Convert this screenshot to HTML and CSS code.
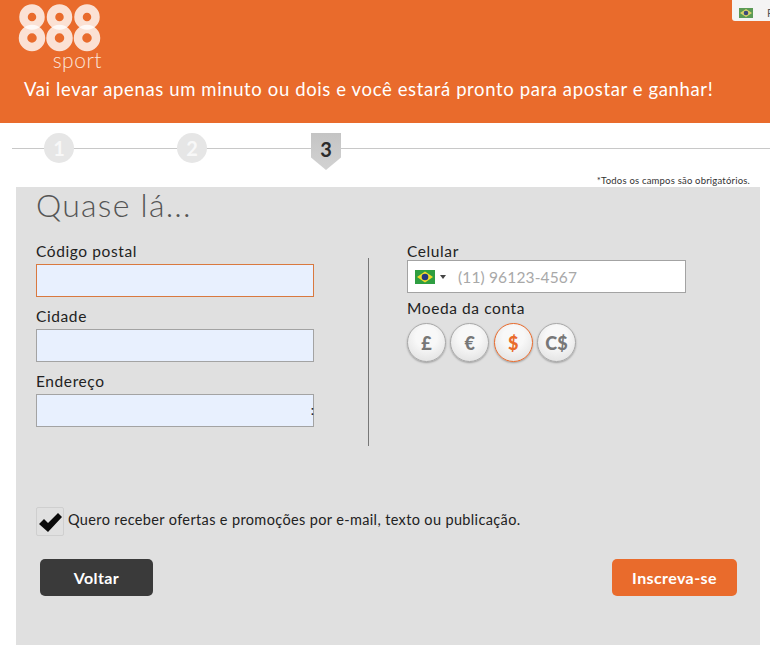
FILE: index.html
```html
<!DOCTYPE html>
<html lang="pt-BR">
<head>
    <meta charset="UTF-8">
    <title>888sport - Inscrição</title>
    <link rel="stylesheet" href="styles.css">
</head>
<body>
    <header class="header">
        <div class="logo">
            <svg class="logo-mark" width="88" height="50" viewBox="0 0 88 50">
                <g fill="none" stroke="#fff" stroke-opacity="0.8" stroke-width="8.5">
                    <circle cx="16" cy="14" r="8.500"/><circle cx="16" cy="35" r="9"/>
                    <circle cx="43.500" cy="14" r="8.500"/><circle cx="43.500" cy="35" r="9"/>
                    <circle cx="71" cy="14" r="8.500"/><circle cx="71" cy="35" r="9"/>
                </g>
            </svg>
            <span class="logo-sport">sport</span>
        </div>
        <p class="tagline">Vai levar apenas um minuto ou dois e você estará pronto para apostar e ganhar!</p>
        <div class="lang-tab">
            <svg class="lang-flag" width="14" height="10" viewBox="0 0 14 10"><rect width="14" height="10" fill="#5b9a55"/><path d="M7 1 13 5 7 9 1 5z" fill="#d9d36a"/><circle cx="7" cy="5" r="2.300" fill="#3d4a7a"/></svg>
            <span>P</span>
        </div>
    </header>

    <div class="steps">
        <div class="step">1</div>
        <div class="step">2</div>
        <div class="step step-current">3</div>
    </div>
    <p class="required-note">*Todos os campos são obrigatórios.</p>

    <main class="panel">
        <h1>Quase lá...</h1>
        <div class="columns">
            <div class="col-left">
                <div class="form-group">
                    <label>Código postal</label>
                    <input type="text" class="field field-focus">
                </div>
                <div class="form-group">
                    <label>Cidade</label>
                    <input type="text" class="field">
                </div>
                <div class="form-group">
                    <label>Endereço</label>
                    <div class="field-wrap">
                        <input type="text" class="field">
                        <span class="field-dots">:</span>
                    </div>
                </div>
            </div>
            <div class="divider"></div>
            <div class="col-right">
                <label>Celular</label>
                <div class="phone">
                    <svg width="20" height="14" viewBox="0 0 20 14"><rect width="20" height="14" fill="#2f9e41"/><path d="M10 1.500 18 7 10 12.500 2 7z" fill="#f2d92c"/><circle cx="10" cy="7" r="3.300" fill="#24377f"/></svg>
                    <span class="caret"></span>
                    <span class="phone-placeholder">(11) 96123-4567</span>
                </div>
                <label class="label-currency">Moeda da conta</label>
                <div class="currencies">
                    <button class="coin">£</button>
                    <button class="coin">€</button>
                    <button class="coin coin-active">$</button>
                    <button class="coin">C$</button>
                </div>
            </div>
        </div>

        <div class="optin">
            <span class="checkbox">
                <svg width="26" height="24" viewBox="0 0 26 24"><path d="M1 13 6 8 10 12 20 2 24 6 10 21z" fill="#0a0a0a"/></svg>
            </span>
            <span class="optin-text">Quero receber ofertas e promoções por e-mail, texto ou publicação.</span>
        </div>

        <div class="buttons">
            <button class="btn btn-back">Voltar</button>
            <button class="btn btn-submit">Inscreva-se</button>
        </div>
    </main>
</body>
</html>
```

FILE: styles.css
```css
* {
    box-sizing: border-box;
}
body {
    margin: 0;
    background: white;
    font-family: "Lato", "Liberation Sans", sans-serif;
    color: #222;
    overflow: hidden;
}
.header {
    position: relative;
    height: 123px;
    background: #e96b2c;
    padding: 3px 0 0 16px;
    color: #fbe4d8;
}
.logo {
    width: 88px;
}
.logo-mark {
    display: block;
}
.logo-sport {
    display: block;
    margin-top: -3px;
    text-align: right;
    font-size: 21px;
    font-weight: 300;
    line-height: 19px;
    letter-spacing: 0.5px;
    padding-right: 2px;
}
.tagline {
    margin: 8px 0 0 8px;
    font-size: 18.5px;
    line-height: 24px;
    letter-spacing: 0.62px;
    color: white;
    white-space: nowrap;
}
.lang-tab {
    position: absolute;
    top: 0;
    right: 0;
    width: 38px;
    height: 21px;
    background: #f4f4f4;
    border-radius: 0 0 0 3px;
    padding: 8px 0 0 7px;
    display: flex;
    gap: 14px;
    font-size: 11px;
    line-height: 10px;
    color: #555;
}
.lang-flag {
    flex: none;
}
.steps {
    position: relative;
    display: flex;
    gap: 103px;
    height: 47px;
    padding: 10px 0 0 44px;
}
.steps::before {
    content: "";
    position: absolute;
    left: 12px;
    right: 0;
    top: 25px;
    height: 1px;
    background: #c8c8c8;
}
.step {
    position: relative;
    width: 30px;
    height: 30px;
    border-radius: 50%;
    background: #e6e6e6;
    color: #f8f8f8;
    font-size: 20px;
    font-weight: 700;
    line-height: 30px;
    text-align: center;
}
.step-current {
    height: 37px;
    margin-left: 1px;
    border-radius: 0;
    background: linear-gradient(#c4c4c4, #d2d2d2);
    color: #2b2b2b;
    line-height: 32px;
    clip-path: polygon(0 0, 100% 0, 100% 66%, 50% 100%, 0 66%);
}
.required-note {
    margin: 0;
    height: 17px;
    padding: 5px 20px 0 0;
    text-align: right;
    font-size: 9.5px;
    line-height: 12px;
    letter-spacing: 0.2px;
    color: #333;
}
.panel {
    width: 744px;
    height: 458px;
    margin-left: 16px;
    background: #e0e0e0;
    padding: 0 20px;
}
h1 {
    margin: 0;
    height: 71px;
    font-size: 32px;
    font-weight: 300;
    line-height: 36px;
    letter-spacing: 1.25px;
    color: #555;
}
.columns {
    display: flex;
    height: 188px;
}
.col-left {
    width: 278px;
    margin-top: -16px;
}
.divider {
    width: 1px;
    margin-left: 54px;
    background: #777;
}
.col-right {
    width: 279px;
    margin: -16px 0 0 38px;
}
.form-group {
    height: 65px;
}
label {
    display: block;
    font-size: 15.5px;
    line-height: 18px;
    letter-spacing: 0.6px;
    color: #222;
}
.form-group label {
    height: 22px;
}
.field {
    display: block;
    width: 278px;
    height: 33px;
    background: #e8f0fe;
    border: 1px solid #a3a3a3;
    padding: 0 8px;
    outline: none;
}
.field-focus {
    border-color: #d9793f;
}
.field-wrap {
    position: relative;
}
.field-dots {
    position: absolute;
    right: 0;
    top: 8px;
    font-size: 13px;
    line-height: 16px;
    color: #111;
}
.phone {
    display: flex;
    align-items: center;
    height: 33px;
    background: white;
    border: 1px solid #a3a3a3;
    padding-left: 7px;
}
.caret {
    width: 0;
    height: 0;
    margin-left: 5px;
    border: 3px solid transparent;
    border-top: 4px solid #444;
    border-bottom: 0;
}
.phone-placeholder {
    margin-left: 12px;
    font-size: 15.5px;
    letter-spacing: 0.15px;
    color: #a8a8a8;
}
.label-currency {
    margin-top: 6px;
    height: 24px;
}
.currencies {
    display: flex;
    gap: 4.33px;
}
.coin {
    width: 39px;
    height: 39px;
    padding: 0;
    border: 1px solid #a8a8a8;
    border-radius: 50%;
    background: radial-gradient(circle at 50% 35%, #f8f8f8 35%, #dcdcdc 100%);
    box-shadow: 0 1px 2px rgba(0,0,0,0.3);
    font-family: inherit;
    font-size: 18px;
    font-weight: 900;
    color: #777;
}
.coin-active {
    border-color: #e96b2c;
    color: #e96b2c;
}
.optin {
    display: flex;
    align-items: center;
    gap: 4px;
    margin-top: 61px;
    height: 29px;
    font-size: 14.5px;
    line-height: 26px;
    letter-spacing: 0.36px;
    color: #222;
}
.optin-text {
    margin-bottom: 3px;
}
.checkbox {
    width: 28px;
    height: 29px;
    border: 1px solid #cfcfcf;
    border-radius: 2px;
    padding: 3px 0 0 1px;
    line-height: 0;
}
.buttons {
    display: flex;
    justify-content: space-between;
    margin-top: 23px;
    padding: 0 3px 0 4px;
}
.btn {
    height: 37px;
    border: none;
    border-radius: 5px;
    color: white;
    font-family: inherit;
    font-size: 16px;
    font-weight: 700;
    letter-spacing: 0.4px;
}
.btn-back {
    width: 113px;
    background: #3a3a3a;
}
.btn-submit {
    width: 125px;
    background: #e96b2c;
}
```
